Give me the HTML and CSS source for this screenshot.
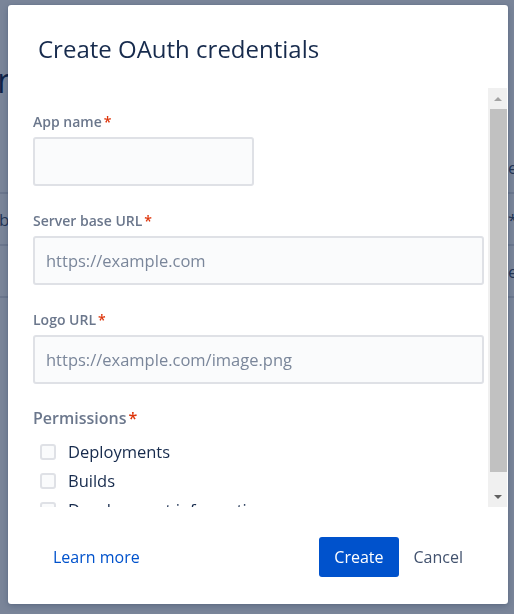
FILE: index.html
```html
<!DOCTYPE html>
<html lang="en">
<head>
    <meta charset="UTF-8">
    <meta name="viewport" content="width=device-width, initial-scale=1.0">
    <title>Create OAuth credentials</title>
    <link rel="stylesheet" href="styles.css">
</head>
<body>
    <!-- Page behind the dialog -->
    <div class="page">
        <h1 class="page-title">nnected apps</h1>
        <div class="apps-list">
            <div class="apps-row">
                <span></span>
                <span>edit</span>
            </div>
            <div class="apps-row">
                <span>bamboo</span>
                <span>*</span>
            </div>
            <div class="apps-row">
                <span></span>
                <span>e</span>
            </div>
        </div>
    </div>

    <div class="blanket"></div>

    <!-- Dialog -->
    <div class="modal">
        <div class="modal-header">
            <h2>Create OAuth credentials</h2>
        </div>

        <div class="modal-body">
            <div class="body-content">
                <div class="field">
                    <label>App name<span class="req">*</span></label>
                    <input type="text" class="text-input short">
                </div>

                <div class="field">
                    <label>Server base URL<span class="req">*</span></label>
                    <input type="text" class="text-input" placeholder="https://example.com">
                </div>

                <div class="field">
                    <label>Logo URL<span class="req">*</span></label>
                    <input type="text" class="text-input" placeholder="https://example.com/image.png">
                </div>

                <div class="field perms">
                    <label class="perms-label">Permissions<span class="req">*</span></label>
                    <div class="check-row"><span class="box"></span>Deployments</div>
                    <div class="check-row"><span class="box"></span>Builds</div>
                    <div class="check-row"><span class="box"></span>Development information</div>
                </div>
            </div>

            <!-- scrollbar -->
            <div class="scrollbar">
                <span class="arrow up"></span>
                <span class="thumb"></span>
                <span class="arrow down"></span>
            </div>
        </div>

        <div class="modal-footer">
            <a href="#" class="learn-more">Learn more</a>
            <div class="actions">
                <button class="btn primary">Create</button>
                <button class="btn subtle">Cancel</button>
            </div>
        </div>
    </div>
</body>
</html>
```

FILE: styles.css
```css
/* Global */
body {
    margin: 0;
    font-family: "Open Sans", "Noto Sans", sans-serif;
    background: #fff;
    color: #172b4d;
    overflow: hidden;
}

/* Page behind */
.page {
    padding-top: 58px;
}

.page-title {
    margin: 0 0 0 -3px;
    font-size: 34px;
    line-height: 44px;
    font-weight: 500;
}

.apps-list {
    margin-top: 40px;
    font-size: 17px;
    color: #42526e;
}

.apps-row {
    display: grid;
    grid-template-columns: 508px 1fr;
    align-items: center;
    height: 50px;
    border-bottom: 2px solid #dfe1e6;
    white-space: nowrap;
    overflow: hidden;
}

.apps-row span:first-child {
    margin-left: -1px;
}

/* Blanket */
.blanket {
    position: fixed;
    inset: 0;
    background: rgba(9, 30, 66, 0.54);
}

/* Modal */
.modal {
    position: fixed;
    left: 8px;
    top: 5px;
    width: 500px;
    height: 599px;
    background: #fff;
    border-radius: 3px;
    box-shadow: 0 0 1px rgba(9, 30, 66, 0.3), 0 2px 6px rgba(9, 30, 66, 0.25);
    display: flex;
    flex-direction: column;
}

.modal-header {
    height: 83px;
    padding: 0 30px;
    display: flex;
    align-items: center;
    box-sizing: border-box;
}

.modal-header h2 {
    margin: 0;
    font-size: 24px;
    font-weight: 500;
    color: #172b4d;
    padding-top: 4px;
}

.modal-body {
    display: flex;
    height: 419px;
    margin-right: 1px;
}

.body-content {
    flex: 1;
    overflow: hidden;
    padding: 24px 4px 0 25px;
}

/* Scrollbar */
.scrollbar {
    width: 19px;
    background: #f0f0f0;
    display: flex;
    flex-direction: column;
    align-items: center;
}

.arrow {
    height: 21px;
    width: 100%;
    display: flex;
    align-items: center;
    justify-content: center;
}

.arrow::before {
    content: "";
    width: 0;
    height: 0;
    border-left: 4px solid transparent;
    border-right: 4px solid transparent;
}

.arrow.up::before {
    border-bottom: 4px solid #a3a3a3;
}

.arrow.down {
    margin-top: auto;
}

.arrow.down::before {
    border-top: 4px solid #606060;
}

.thumb {
    width: 17px;
    height: 363px;
    margin-left: 1px;
    background: #c1c1c1;
}

/* Fields */
.field {
    margin-bottom: 25px;
}

.field label {
    display: block;
    font-size: 14px;
    font-weight: 600;
    line-height: 20px;
    color: #6b778c;
    margin-bottom: 5px;
}

.req {
    color: #de350b;
    margin-left: 2px;
}

.text-input {
    display: block;
    width: 100%;
    height: 49px;
    box-sizing: border-box;
    background: #fafbfc;
    border: 2px solid #dfe1e6;
    border-radius: 3px;
    padding: 0 11px;
    font-family: inherit;
    font-size: 16.5px;
    color: #172b4d;
    outline: none;
}

.text-input::placeholder {
    color: #7a869a;
}

.text-input.short {
    width: 221px;
}

/* Permissions */
.perms {
    margin-top: -2px;
}

.field .perms-label {
    font-size: 16px;
    line-height: 22px;
    margin-bottom: 8px;
}

.check-row {
    display: flex;
    align-items: center;
    height: 29px;
    font-size: 16.5px;
    color: #172b4d;
    white-space: nowrap;
}

.box {
    width: 16px;
    height: 16px;
    box-sizing: border-box;
    border: 2px solid #dfe1e6;
    border-radius: 3px;
    background: #fafbfc;
    margin: 0 12px 0 7px;
}

/* Footer */
.modal-footer {
    flex: 1;
    display: flex;
    align-items: center;
    justify-content: space-between;
    padding: 2px 30px 0 30px;
}

.learn-more {
    padding: 0 15px;
    font-size: 16px;
    color: #0052cc;
    text-decoration: none;
}

.actions {
    display: flex;
}

.btn {
    height: 40px;
    padding: 0 15px;
    border: none;
    border-radius: 3px;
    font-family: inherit;
    font-size: 16px;
    cursor: pointer;
}

.btn.primary {
    background: #0052cc;
    color: #fff;
}

.btn.subtle {
    background: none;
    color: #42526e;
}
```
